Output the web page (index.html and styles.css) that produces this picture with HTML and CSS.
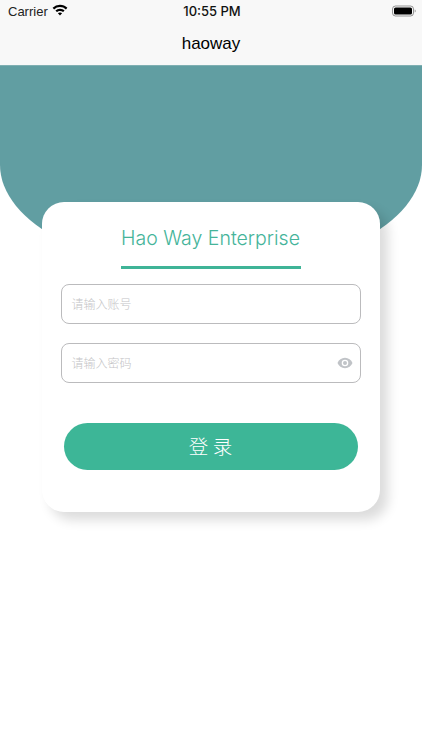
FILE: index.html
```html
<!DOCTYPE html>
<html lang="zh">
<head>
<meta charset="utf-8">
<title>haoway</title>
<link rel="stylesheet" href="styles.css">
</head>
<body>
<div class="page">
  <header class="top">
    <div class="status">
      <div class="status-left">
        <span class="carrier">Carrier</span>
        <svg class="wifi" width="16" height="12" viewBox="0 0 16 12"><path d="M8 .8c2.800 0 5.400 1.100 7.400 3L13.900 5.400A8.600 8.600 0 0 0 8 3a8.600 8.600 0 0 0-5.900 2.400L.6 3.800A10.700 10.700 0 0 1 8 .8z"/><path d="M8 4.700c1.800 0 3.400.7 4.600 1.800l-1.500 1.600A4.500 4.500 0 0 0 8 6.900c-1.200 0-2.300.5-3.100 1.200L3.400 6.500A6.700 6.700 0 0 1 8 4.700z"/><path d="M8 8.400c.8 0 1.600.3 2.100.9L8 11.600 5.900 9.300c.5-.6 1.300-.9 2.100-.9z"/></svg>
      </div>
      <span class="time">10:55 PM</span>
      <div class="status-right">
        <svg width="24" height="12" viewBox="0 0 24 12"><rect x=".5" y="1" width="21" height="10" rx="3" fill="none" stroke="#000" stroke-opacity=".4"/><rect x="2" y="2.500" width="18" height="7" rx="1.600" fill="#000"/><path d="M22.700 4.500v3c.6-.2 1-.8 1-1.500s-.4-1.300-1-1.500z" fill="#000" fill-opacity=".4"/></svg>
      </div>
    </div>
    <div class="nav">haoway</div>
  </header>
  <main class="content">
    <div class="hero"></div>
    <section class="card">
      <h1 class="title">Hao Way Enterprise</h1>
      <div class="field"><span class="placeholder">请输入账号</span></div>
      <div class="field field-password">
        <span class="placeholder">请输入密码</span>
        <svg class="eye" width="16" height="12" viewBox="0 0 16 12"><path fill-rule="evenodd" fill="#c0c3c7" d="M8 .8c3.400 0 6.300 2.100 7.500 5.200-1.200 3.100-4.100 5.200-7.500 5.200S1.700 9.100.5 6C1.700 2.900 4.600.8 8 .8zm0 1.900a3.300 3.300 0 1 0 0 6.600 3.300 3.300 0 0 0 0-6.600zM8 4a2 2 0 1 1 0 4 2 2 0 0 1 0-4z"/></svg>
      </div>
      <button class="login" type="button">登 录</button>
    </section>
  </main>
</div>
</body>
</html>
```
FILE: styles.css
```css
* { box-sizing: border-box; }
html, body { margin: 0; padding: 0; background: #fff; }
.page {
  width: 422px;
  height: 750px;
  overflow: hidden;
  font-family: "Liberation Sans", Arial, sans-serif;
}
.top { height: 65px; background: #f8f8f8; }
.status {
  height: 22px;
  padding: 0 6px 0 8px;
  display: grid;
  grid-template-columns: 1fr auto 1fr;
  align-items: center;
  font-size: 13px;
  color: #111;
}
.status-left { display: flex; align-items: center; gap: 4px; }
.status-right { display: flex; align-items: center; justify-content: flex-end; }
.carrier { color: #222; }
.wifi { fill: #000; margin-top: -3px; }
.time { font-family: Inter, "Liberation Sans", sans-serif; font-weight: 500; font-size: 13px; color: #111; }
.nav {
  height: 43px;
  padding-top: 1px;
  display: flex;
  align-items: center;
  justify-content: center;
  font-size: 17px;
  color: #000;
}
.content { position: relative; display: flex; flex-direction: column; align-items: center; }
.hero {
  position: absolute;
  top: 0;
  left: 0;
  width: 422px;
  height: 207px;
  background: #619ea2;
  border-top: 1px solid #7fafb2;
  border-radius: 0 0 211px 211px / 0 0 107px 107px;
}
.card {
  position: relative;
  margin-top: 137px;
  margin-left: -1px;
  width: 338px;
  height: 310px;
  padding: 19px 19px 0 19px;
  background: #fff;
  border-radius: 22px;
  box-shadow: 8px 8px 12px rgba(0, 0, 0, .14);
  display: flex;
  flex-direction: column;
  align-items: center;
}
.title {
  margin: 0 0 15px;
  padding-bottom: 11px;
  font-weight: 300;
  font-size: 19.500px;
  line-height: 34px;
  color: #45b49a;
  font-family: Inter, "Noto Sans", sans-serif;
  border-bottom: 3px solid #3fb497;
  width: 180px;
  text-align: center;
  white-space: nowrap;
}
.field {
  width: 300px;
  height: 40px;
  flex: none;
  margin-bottom: 19px;
  padding: 0 10px 2px;
  border: 1px solid #bbbbbd;
  border-radius: 8px;
  display: flex;
  align-items: center;
  justify-content: space-between;
}
.placeholder {
  font-family: "Noto Sans CJK SC", sans-serif;
  font-weight: 300;
  font-size: 12px;
  color: #c4c4c6;
}
.field-password { margin-bottom: 40px; padding-right: 7px; }
.eye { margin-top: 2px; }
.login {
  width: 294px;
  height: 47px;
  flex: none;
  border: 0;
  border-radius: 24px;
  background: #3db697;
  color: #fff;
  font-family: "Noto Sans CJK SC", sans-serif;
  font-weight: 300;
  font-size: 19.500px;
  padding: 0 0 2px;
}
```
